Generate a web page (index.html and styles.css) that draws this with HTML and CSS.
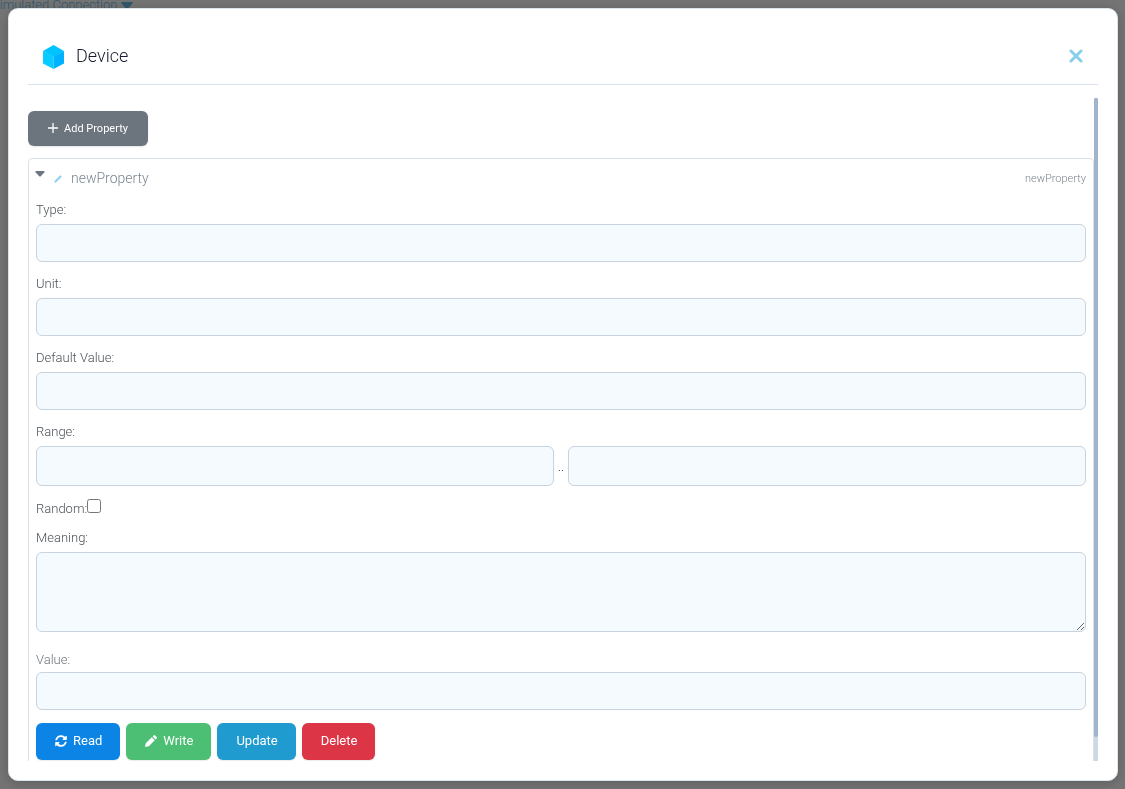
FILE: index.html
```html
<!DOCTYPE html>
<html lang="en">

<head>
    <meta charset="UTF-8">
    <meta name="viewport" content="width=device-width, initial-scale=1.0">
    <title>Device</title>
    <link rel="stylesheet" href="styles.css">
</head>

<body>
    <a class="connection" href="#">Simulated Connection
        <svg width="12" height="8" viewBox="0 0 12 8"><path d="M1 1h10a1 1 0 0 1 .5 1.500L7 7.500q-1 1-2 0L.5 2.500A1 1 0 0 1 1 1z" fill="currentColor"/></svg>
    </a>
    <div class="overlay">
        <div class="modal" role="dialog" aria-labelledby="title">
            <div class="modal-header">
                <svg class="logo" width="23" height="26" viewBox="0 0 23 26">
                    <path d="M11.500 1L22 7 11.500 13 1 7z" fill="#00c4ff"/>
                    <path d="M1 7L11.500 12.500V25L1 19.500z" fill="#08ccff"/>
                    <path d="M22 7L11.500 12.500V25L22 19.500z" fill="#00b2ff"/>
                </svg>
                <h1 id="title">Device</h1>
                <button class="close" aria-label="Close">
                    <svg width="14" height="14" viewBox="0 0 14 14"><path d="M2 2l10 10M12 2L2 12" stroke="#87ceeb" stroke-width="3" stroke-linecap="round"/></svg>
                </button>
            </div>
            <div class="modal-body">
                <div class="content">
                    <button class="btn add">
                        <svg width="10" height="12" viewBox="0 0 10 12"><path d="M5 0v10M0 5h10" stroke="currentColor" stroke-width="1.300"/></svg>
                        Add Property
                    </button>
                    <div class="property">
                        <div class="property-header">
                            <svg class="caret" width="10" height="6" viewBox="0 0 10 6"><path d="M1 0h8q1 .5 .4 1.300L6 5q-1 1-2 0L.6 1.300Q0 .5 1 0z" fill="#6c757d"/></svg>
                            <svg class="edit" width="8" height="8" viewBox="0 0 8 8"><path d="M1.500 6.500L6.500 1.500" stroke="#8fd0f0" stroke-width="2.200" stroke-linecap="round"/></svg>
                            <span class="property-name">newProperty</span>
                            <span class="property-id">newProperty</span>
                        </div>
                        <div class="field">
                            <label for="type">Type:</label>
                            <input type="text" id="type">
                        </div>
                        <div class="field">
                            <label for="unit">Unit:</label>
                            <input type="text" id="unit">
                        </div>
                        <div class="field">
                            <label for="default">Default Value:</label>
                            <input type="text" id="default">
                        </div>
                        <div class="field">
                            <label for="from">Range:</label>
                            <div class="range">
                                <input type="text" id="from">
                                <span>..</span>
                                <input type="text" id="to" aria-label="Range end">
                            </div>
                        </div>
                        <div class="random">
                            <label for="random">Random:</label>
                            <input type="checkbox" id="random">
                        </div>
                        <div class="field meaning">
                            <label for="meaning">Meaning:</label>
                            <textarea id="meaning"></textarea>
                        </div>
                        <div class="field value">
                            <label for="value">Value:</label>
                            <input type="text" id="value">
                        </div>
                        <div class="actions">
                            <button class="btn read">
                                <svg width="12" height="12" viewBox="0 0 512 512"><path fill="currentColor" d="M370 134c-32-30-73-46-116-46-77 0-144 53-162 127-1 5-6 9-12 9H24c-8 0-14-7-12-14C33 94 134 8 256 8c66 0 127 26 171 68l36-36c15-15 41-4 41 17v134c0 13-11 24-24 24H346c-21 0-32-26-17-41zM32 296h134c21 0 32 26 17 41l-41 41c32 30 73 46 116 46 77 0 144-53 162-127 1-5 6-9 12-9h56c8 0 14 7 12 14-21 116-122 202-244 202-66 0-127-26-171-68l-36 36c-15 15-41 4-41-17V320c0-13 11-24 24-24z"/></svg>
                                Read
                            </button>
                            <button class="btn write">
                                <svg width="12" height="12" viewBox="0 0 16 16"><path fill="currentColor" d="M0 16l1-5L9 3l4 4-8 8zM10 2l1.500-1.500q1-1 2 0l2 2q1 1 0 2L14 6z"/></svg>
                                Write
                            </button>
                            <button class="btn update">Update</button>
                            <button class="btn delete">Delete</button>
                        </div>
                    </div>
                </div>
                <div class="scrollbar"><div class="thumb"></div></div>
            </div>
        </div>
    </div>
</body>

</html>
```
FILE: styles.css
```css
* {
    box-sizing: border-box;
}
body {
    margin: 0;
    height: 100vh;
    overflow: hidden;
    background-color: #e8e8e8;
    font-family: Roboto, sans-serif;
    font-size: 13px;
    font-weight: 300;
    color: #212529;
}
.connection {
    display: block;
    margin: -4px 0 0 -8px;
    line-height: 18px;
    color: #5fb0d8;
    text-decoration: none;
}
/* dark layer over the page, holds the dialog */
.overlay {
    position: fixed;
    inset: 0;
    display: flex;
    padding: 8px 7px 8px 8px;
    background-color: rgba(0, 0, 0, 0.5);
}
.modal {
    flex: 1;
    display: flex;
    flex-direction: column;
    min-width: 0;
    padding: 19px;
    background-color: #fff;
    border: 1px solid #dbe5ee;
    border-radius: 10px;
    box-shadow: 0 2px 12px rgba(0, 0, 0, 0.2);
}
.modal-header {
    display: flex;
    align-items: center;
    height: 57px;
    padding: 0 15px 1px 14px;
    border-bottom: 1px solid #d9e2ef;
}
.modal-header h1 {
    margin: 0 auto 0 11px;
    font-size: 18px;
    font-weight: 300;
    line-height: 22px;
    color: #161c2d;
}
.logo {
    margin-top: 2px;
}
.close {
    display: flex;
    padding: 0;
    border: 0;
    background: none;
    cursor: pointer;
}
.modal-body {
    flex: 1;
    display: flex;
    min-height: 0;
    margin-top: 13px;
}
.content {
    flex: 1;
    overflow: hidden;
    padding-top: 13px;
}
.scrollbar {
    width: 4px;
    background-color: #cdd8e4;
}
.thumb {
    height: 96.4%;
    background-color: #9fb5cc;
    border-radius: 2px;
}
.btn {
    display: flex;
    align-items: center;
    gap: 6px;
    height: 37px;
    padding: 0 18px 2px 19px;
    border: 0;
    border-radius: 6px;
    color: #fff;
    font-family: inherit;
    font-size: 13px;
    font-weight: 400;
    box-shadow: 0 1px 2px rgba(0, 0, 0, 0.1);
    cursor: pointer;
}
.add {
    height: 35px;
    padding: 0 20px;
    font-size: 11px;
    background-color: #6c757d;
}
.property {
    height: 630px;
    margin-top: 12px;
    padding: 0 7px;
    border: 1px solid #d9e2ec;
    border-radius: 4px;
}
.property-header {
    display: flex;
    align-items: center;
    height: 41px;
    padding-bottom: 3px;
    color: #7c868f;
}
.caret {
    margin: 0 9px 9px -1px;
}
.edit {
    margin: 2px 9px 0 0;
}
.property-name {
    margin-right: auto;
    font-size: 14px;
}
.property-id {
    font-size: 11px;
}
.field {
    margin-bottom: 12px;
}
label {
    line-height: 20px;
    color: #4b5259;
}
.field label {
    display: block;
    margin-bottom: 4px;
}
input[type="text"],
textarea {
    display: block;
    width: 100%;
    height: 38px;
    margin: 0;
    padding: 8px 12px;
    border: 1px solid #c8d3e0;
    border-radius: 6px;
    background-color: #f5fafe;
    font-family: inherit;
    font-size: 13px;
}
.range {
    display: flex;
    align-items: center;
    gap: 4px;
}
.range input[type="text"] {
    height: 40px;
}
.random {
    display: flex;
    margin: 13px 0 9px;
}
.random input {
    width: 14px;
    height: 14px;
    margin: 0;
}
.field textarea {
    height: 80px;
}
.meaning {
    margin-bottom: 18px;
}
.value {
    margin-bottom: 13px;
}
.value label {
    margin-bottom: 2px;
    color: #6c757d;
}
.actions {
    display: flex;
    gap: 6px;
}
.read {
    background-color: #0b84e6;
}
.write {
    background-color: #4dbf74;
}
.update {
    background-color: #209bcf;
}
.delete {
    background-color: #dc3545;
}
```
